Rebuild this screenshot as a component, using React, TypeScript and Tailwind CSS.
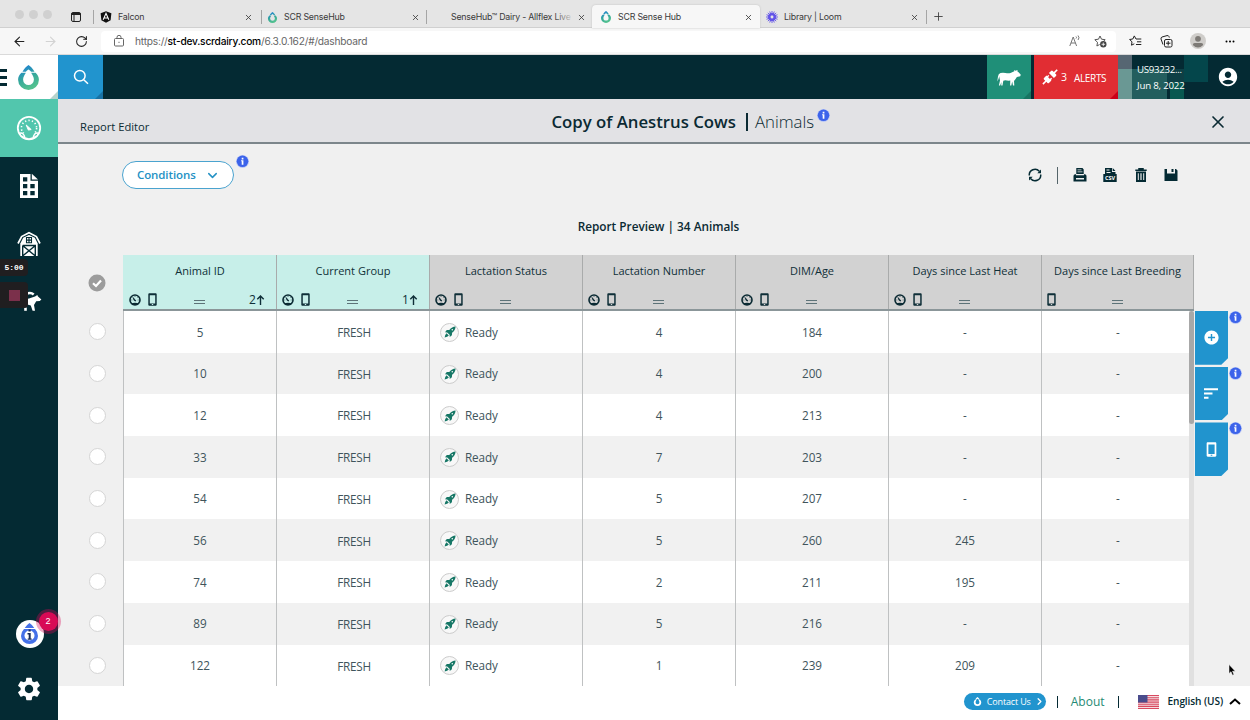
import type { ReactNode } from "react";
import { ArrowLeft, ArrowRight, ChevronDown, ChevronRight, Plus, RotateCw, X } from "lucide-react";
import { MdAccountCircle, MdAddCircle, MdSettings } from "react-icons/md";
import { clsx } from "clsx";

const columns = [
  { label: "Animal ID", gauge: true, sort: "2" },
  { label: "Current Group", gauge: true, sort: "1" },
  { label: "Lactation Status", gauge: true },
  { label: "Lactation Number", gauge: true },
  { label: "DIM/Age", gauge: true },
  { label: "Days since Last Heat", gauge: true },
  { label: "Days since Last Breeding", gauge: false },
];

const rows = [
  ["5", "4", "184", "-"],
  ["10", "4", "200", "-"],
  ["12", "4", "213", "-"],
  ["33", "7", "203", "-"],
  ["54", "5", "207", "-"],
  ["56", "5", "260", "245"],
  ["74", "2", "211", "195"],
  ["89", "5", "216", "-"],
  ["122", "1", "239", "209"],
];

function Drop({ size, mono }: { size: number; mono?: boolean }) {
  return (
    <svg width={size} height={size} viewBox="0 0 24 24" className="shrink-0">
      <defs>
        <linearGradient id="drop" x1="0" y1="0" x2="0.4" y2="1">
          <stop offset="0.2" stopColor="#2389c9" />
          <stop offset="0.6" stopColor="#36a99a" />
          <stop offset="1" stopColor="#52c18f" />
        </linearGradient>
      </defs>
      <path
        fill={mono ? "#fff" : "url(#drop)"}
        fillRule="evenodd"
        d="M12 0c2 1 4.400 4 5.800 6.500h-3.300C13.300 5.300 12.600 4.700 12 4.400c-.6.300-1.300.9-2.500 2.100H6.200C7.600 4 10 1 12 0ZM5.200 7.500h4.300C8.300 9.500 6.800 11.600 6.800 14a5.200 5.200 0 0 0 10.400 0c0-2.400-1.500-4.500-2.700-6.500h4.300c2 2 3.200 4.200 3.200 6.700a10 9.800 0 0 1-20 0c0-2.500 1.200-4.700 3.200-6.700Z"
      />
    </svg>
  );
}

function InfoBadge({ className }: { className?: string }) {
  return (
    <svg width="13" height="13" viewBox="0 0 13 13" className={clsx("shrink-0", className)}>
      <circle cx="6.500" cy="6.500" r="6.500" fill="#b9c6f5" />
      <circle cx="6.500" cy="6.300" r="5.800" fill="#3c63ea" />
      <path d="M5.700 2.800h1.700v1.600H5.700zM5.100 5.300h2.300v4.400H5.700V6.300h-.6z" fill="#fff" />
    </svg>
  );
}

function Gauge() {
  return (
    <svg width="12" height="12" viewBox="0 0 12 12">
      <circle cx="6" cy="6" r="5" fill="none" stroke="#0b2a33" strokeWidth="1.600" />
      <path d="M2 9.500q4-1.500 8 0L8.500 11h-5Z" fill="#0b2a33" />
      <path d="M4 3.500l1.200 3L7 7Z" fill="#0b2a33" stroke="#0b2a33" strokeWidth=".8" />
      <path d="M2.300 6h1M6 2v1M9.700 6h-1M8.600 3.400l-.6.600" stroke="#0b2a33" strokeWidth=".6" />
    </svg>
  );
}

function Phone({ className }: { className?: string }) {
  return (
    <svg width="9" height="13" viewBox="0 0 9 13" className={className}>
      <path
        fill="currentColor"
        fillRule="evenodd"
        d="M1.200.3h6.600c.5 0 .9.400.9.900v10.600c0 .5-.4.900-.9.900H1.200c-.5 0-.9-.4-.9-.9V1.200c0-.5.400-.9.900-.9ZM1.800 2.200v8.200h5.400V2.200ZM3.800 11.100v.8h1.400v-.8Z"
      />
    </svg>
  );
}

function Rocket() {
  return (
    <svg width="12" height="12" viewBox="0 0 12 12" fill="#167766">
      <path fillRule="evenodd" d="M11.600.4C9.200.5 7 1.700 5.300 3.900L2.800 4.100 1 6.200l2.200.2L5.600 8.800l.2 2.200 2.100-1.800.2-2.500C10.300 5 11.500 2.800 11.600.4ZM8.300 2.900a.8.800 0 1 1 0 1.600.8.800 0 0 1 0-1.600Z" />
      <path d="M2.500 7.200l2.300 2.300Q3.500 11 .6 11.400 1 8.500 2.500 7.200Z" />
    </svg>
  );
}

function Cow() {
  return (
    <svg width="24" height="16" viewBox="0 0 24 16" className="mt-px">
      <path
        fill="currentColor"
        d="M.3 11.500L1 6.500Q1.300 3.500 3.500 2.900q2.500-.4 5 0 3 .5 5 0L17.300 1.300 17.200.1l1.300.6L20.600 0l-.3 1.300 1.500 1.200 2 2.300-.6 1.500-3.300.6-1.700 2.600-1.200 1.500.3 4.500h-1.300l-.8-4.100-.9 4.100h-1.200l.2-4.900Q11 11 8.300 10.300l-2 .5-.8 4.700H4.200l.2-3.500-1.300 3.500H1.900l1.100-5.100L2.200 6.300 1.500 9Z"
      />
    </svg>
  );
}

function CalfIcon() {
  return (
    <svg width="26" height="26" viewBox="0 0 26 26" fill="#fff">
      <path d="M10 5.200q4.500-2.600 7.700.3" fill="none" stroke="#fff" strokeWidth="2.400" />
      <path d="M8 10.500l5-1 6-2 2.300-1.600.7 1.600 3.400 2.900-1.600 1.600-3.600.2L18 16l1 5.800h-2.400L14.800 16.500 8 14.500Z" />
      <path d="M8.200 18.500h2.600v3.300H8.200z" />
    </svg>
  );
}

function DashboardIcon() {
  return (
    <svg width="26" height="26" viewBox="0 0 26 26" fill="none" stroke="#fff">
      <circle cx="13" cy="13" r="11.200" strokeWidth="1.800" />
      <circle cx="13" cy="13" r="7.600" strokeWidth="1.600" strokeDasharray="1.300 2.200" />
      <path d="M5 17.500l4 .8 1.500-1.300h5l1.500 1.300 4-.8v4.200L13 25l-8-3.200Z" fill="#52c6ad" stroke="none" />
      <path d="M4.800 20.700q8.200 7 16.400 0" strokeWidth="1.800" />
      <path d="M3.600 18.200c3-1 5 1.300 5 5M22.400 18.200c-3-1-5 1.300-5 5" strokeWidth="1.400" />
      <path d="M10.200 10l5 4.500-2.800.6Z" fill="#fff" strokeWidth="1" />
    </svg>
  );
}

function ReportIcon() {
  return (
    <svg width="20" height="26" viewBox="0 0 20 26">
      <path fill="#fff" fillRule="evenodd" d="M1 1h10.500v6.800H19V25H1ZM4 4.200v4.300h4.300V4.200ZM4 11v4.300h4.300V11Zm7.300 0v4.300h4.400V11ZM4 18v4.300h4.300V18Zm7.300 0v4.300h4.400V18Z" />
      <path fill="#fff" d="M12.800.8L19 6.600h-6.200Z" />
    </svg>
  );
}

function BarnIcon() {
  return (
    <svg width="24" height="26" viewBox="0 0 24 26" fill="none">
      <path d="M1 12.500L4.600 5.600 12 1.800l7.400 3.800 3.600 6.900" stroke="#fff" strokeWidth="1.700" />
      <path d="M3.300 12.500L6.200 6.800 12 3.900l5.800 2.900 2.900 5.700V25H3.300Z" fill="#fff" />
      <path d="M9.500 6.500h5v5.200h-5zM12 6.500v5.200M9.500 9.100h5" stroke="#042a33" strokeWidth="1.100" />
      <path d="M5.700 14.500h12.600V25M5.700 14.500V25M6.200 15L17.800 24.500M17.800 15L6.200 24.500" stroke="#042a33" strokeWidth="1.400" />
    </svg>
  );
}

function Tab({ icon, title, className, fade }: { icon?: ReactNode; title: string; className?: string; fade?: boolean }) {
  return (
    <div className={clsx("relative flex items-center", className)}>
      <span className="flex w-3 shrink-0 justify-center">{icon}</span>
      <span className="ml-1.5 flex-1 whitespace-nowrap">{title}</span>
      {fade && <span className="absolute right-[18px] h-3.5 w-5 bg-linear-to-r from-transparent to-[#e5e5e5]" />}
      <X size={9} strokeWidth={2.200} className="shrink-0" />
    </div>
  );
}

function BrowserChrome() {
  return (
    <div className="h-[55px] font-['Inter'] text-[#3a3a3a]">
      <div className="flex h-7 items-end border-b border-[#d0d0d0] bg-[#e5e5e5] text-[8.800px] tracking-[-0.200px]">
        <div className="flex h-full w-[93px] items-center pt-0.5">
          <div className="ml-[15px] flex gap-[5px]">
            <span className="size-[9px] rounded-full bg-[#d0d0d0]" />
            <span className="size-[9px] rounded-full bg-[#d0d0d0]" />
            <span className="size-[9px] rounded-full bg-[#d0d0d0]" />
          </div>
          <svg width="10" height="10" viewBox="0 0 10 10" className="ml-[19px] mt-1" fill="none" stroke="#222">
            <rect x=".5" y=".5" width="9" height="9" rx="1.500" />
            <path d="M.5 2h9" strokeWidth="2" />
            <path d="M3 2v7.500" />
          </svg>
        </div>
        <Tab
          title="Falcon"
          className="mb-[3px] h-3.5 w-[168px] border-l border-[#a5a5a5] pr-2 pl-[6px]"
          icon={
            <svg width="12" height="12" viewBox="0 0 12 12">
              <path d="M6 .3l5.400 1.900-.8 7.100L6 11.800 1.400 9.300.6 2.200Z" fill="#111" />
              <path d="M3.200 8.800L6 2.300l2.800 6.500M4.300 7h3.400" stroke="#fff" fill="none" strokeWidth="1.100" />
            </svg>
          }
        />
        <Tab title="SCR SenseHub" className="mb-[3px] h-3.5 w-[165px] border-l border-[#a5a5a5] pr-[6px] pl-[4px]" icon={<Drop size={11} />} />
        <Tab title="SenseHub™ Dairy - Allflex Live" fade className="mb-[3px] h-3.5 w-[166px] border-l border-[#a5a5a5] pr-[6px] pl-1.5 tracking-[-0.220px]" />
        <Tab title="SCR Sense Hub" className="-mb-px h-[23px] w-[168px] rounded-t bg-[#f7f7f7] pt-px pr-[7px] pl-2 shadow-[0_0_2px_#bbb]" icon={<Drop size={12} />} />
        <Tab
          title="Library | Loom"
          className="mb-[3px] h-3.5 w-[167px] border-r border-[#a5a5a5] pr-[7px] pl-[6px]"
          icon={
            <svg width="12" height="12" viewBox="0 0 12 12" stroke="#6254e8" fill="none">
              <circle cx="6" cy="6" r="3" strokeWidth="2" />
              <path d="M6 0v12M0 6h12M1.800 1.800l8.400 8.400M10.200 1.800l-8.400 8.400M3.700.5l4.600 11M.5 8.300l11-4.600M8.300.5L3.700 11.500M.5 3.700l11 4.600" strokeWidth=".9" />
              <circle cx="6" cy="6" r="1.400" fill="#e5e5e5" stroke="none" />
            </svg>
          }
        />
        <Plus size={13} strokeWidth={1.600} className="mb-[4px] ml-[5px]" />
      </div>
      <div className="flex h-[27px] items-center border-b border-[#dadada] bg-[#f7f7f7] text-[#222]">
        <ArrowLeft size={15} strokeWidth={1.700} className="ml-[12px]" />
        <ArrowRight size={15} strokeWidth={1.700} className="ml-[16px] text-[#d3d3d3]" />
        <RotateCw size={13} strokeWidth={1.900} className="ml-[17px]" />
        <div className="ml-[13px] flex h-[21px] w-[1015px] items-center rounded-sm bg-white text-[10.200px] text-[#666]">
          <svg width="10" height="12" viewBox="0 0 10 12" fill="none" stroke="#666" className="ml-[13px]">
            <rect x=".5" y="3.500" width="9" height="7.500" rx="1" />
            <path d="M3 3.500V2.300a2 2 0 0 1 4 0v1.200M4.400 7.300h1.200" />
          </svg>
          <span className="ml-[11px] w-[233px] pt-px tracking-[-0.220px] whitespace-nowrap">
            https://<span className="font-medium text-black">st-dev.scrdairy.com</span>/6.3.0.162/#/dashboard
          </span>
          <svg width="12" height="12" viewBox="0 0 12 12" fill="none" stroke="#666" strokeWidth=".9" className="ml-auto">
            <path d="M.8 11L4.200 2l3.400 9M2 8h4.400M7 3.500q1-1 0-2M9 5q2-2.300 0-4.500" />
          </svg>
          <svg width="13" height="13" viewBox="0 0 13 13" fill="none" stroke="#555" className="mr-[9px] ml-[13px]">
            <path d="M6 1l1.500 3.200 3.700.5-2.600 2.500M6 1L4.500 4.200.8 4.700l2.700 2.600-.6 3.700 2.700-1.500" />
            <circle cx="9.300" cy="9.300" r="3.200" fill="#444" stroke="none" />
            <path d="M9.300 7.500v3.600M7.500 9.300h3.600" stroke="#fff" strokeWidth=".8" />
          </svg>
        </div>
        <svg width="13" height="12" viewBox="0 0 13 12" fill="none" stroke="#222" className="ml-[13px]">
          <path d="M7 4L5.300.9 3.800 4 .6 4.500 3 6.800l-.5 3.400 2.800-1.400M7 4h5.300M8 6.800h4.300M7 9.500h5.300" />
        </svg>
        <svg width="13" height="13" viewBox="0 0 13 13" fill="none" stroke="#222" className="ml-[18px]">
          <rect x="4.500" y="4.500" width="7.500" height="7.500" rx="1.500" />
          <path d="M8.200 6v4.500M6 8.200h4.500M3 9.500L1 4Q.7 2.500 2 2l5-1.400q1.500-.3 2 1l.3 1" />
        </svg>
        <svg width="16" height="16" viewBox="0 0 16 16" className="ml-[17px]">
          <circle cx="8" cy="8" r="8" fill="#cfcdca" />
          <circle cx="8" cy="5.800" r="2.900" fill="#7d7a76" />
          <path d="M2.800 12q0-2 2-2h6.400q2 0 2 2-5.200 5-10.400 0Z" fill="#7d7a76" />
        </svg>
        <svg width="10" height="3" viewBox="0 0 10 3" className="ml-[19px]">
          <circle cx="1.500" cy="1.500" r="1" />
          <circle cx="5" cy="1.500" r="1" />
          <circle cx="8.500" cy="1.500" r="1" />
        </svg>
      </div>
    </div>
  );
}

function TopBar() {
  return (
    <header className="flex h-11 bg-[#042a33] text-white">
      <div className="relative flex w-[58px] items-center bg-white">
        <div className="flex w-[7px] flex-col gap-1">
          <span className="h-[3px] bg-[#042a33]" />
          <span className="h-[3px] bg-[#042a33]" />
          <span className="h-[3px] bg-[#042a33]" />
        </div>
        <div className="ml-[9px]">
          <Drop size={25} />
        </div>
        <span className="absolute right-0 bottom-0 size-2 bg-[#b5d3cc] [clip-path:polygon(100%_0,100%_100%,0_100%)]" />
      </div>
      <div className="relative flex w-[45px] items-center justify-center bg-[#2194ce]">
        <svg width="16" height="16" viewBox="0 0 16 16" fill="none" stroke="#fff" strokeWidth="1.500">
          <circle cx="6.800" cy="6.800" r="5.300" />
          <path d="M10.700 10.700L15 14.800" />
        </svg>
        <span className="absolute right-0 bottom-0 size-2 bg-[#1872a5] [clip-path:polygon(100%_0,100%_100%,0_100%)]" />
      </div>
      <div className="relative ml-auto flex w-11 items-center justify-center bg-[#1f8f78]">
        <Cow />
        <span className="absolute right-0 bottom-0 size-2 bg-[#177562] [clip-path:polygon(100%_0,100%_100%,0_100%)]" />
      </div>
      <div className="relative ml-[3px] flex w-[84px] items-center bg-[#e12d33]">
        <svg width="16" height="16" viewBox="0 0 16 16" className="ml-2">
          <g transform="rotate(-45 8 8)" fill="#fff">
            <path d="M-2 7.200h4V5.500q0-1 1-1h3.500v7H3q-1 0-1-1V8.800h-4ZM6.500 5.300h1.800v1.400H6.500zM6.500 9.300h1.800v1.400H6.500zM10 4.500h3q1.200 0 1.200 1.200v1.500h4v1.600h-4v1.500q0 1.200-1.200 1.200h-3Z" />
          </g>
        </svg>
        <span className="ml-[3px] pt-0.5 text-[10.500px]">3</span>
        <span className="ml-[7px] pt-0.5 text-[10px] tracking-[-0.350px]">ALERTS</span>
        <span className="absolute right-0 bottom-0 size-2 bg-[#cc0018] [clip-path:polygon(100%_0,100%_100%,0_100%)]" />
      </div>
      <div className="relative w-[90px]">
        <svg width="90" height="44" className="absolute inset-0">
          <path d="M0 0h14v14H0z" fill="#566672" />
          <path d="M0 14h14v30H0z" fill="#6a9894" />
          <path d="M14 14h35v30H14z" fill="#235e5e" />
          <path d="M52 27h14v17H52z" fill="#085850" />
          <path d="M49 14h17v13H49z" fill="#0d3f45" />
          <path d="M66 0h24v27H66z" fill="#04464b" />
        </svg>
        <div className="relative ml-[19px] pt-[7px] text-[9.700px] leading-4 tracking-[-0.200px] whitespace-nowrap">
          <p className="tracking-[-0.300px]">US93232...</p>
          <p>Jun 8, 2022</p>
        </div>
      </div>
      <div className="flex w-[42px] items-center pl-[9px]">
        <MdAccountCircle size={22} />
      </div>
    </header>
  );
}

function Sidebar() {
  return (
    <aside className="relative flex w-[58px] shrink-0 flex-col items-center bg-[#042a33] text-white">
      <div className="flex h-[58px] w-full items-center justify-center bg-[#52c6ad]">
        <DashboardIcon />
      </div>
      <div className="flex h-[58px] items-center">
        <ReportIcon />
      </div>
      <div className="flex h-[58px] items-center">
        <BarnIcon />
      </div>
      <div className="flex h-[58px] items-center">
        <CalfIcon />
      </div>
      <div className="relative mt-auto mb-[27px] ml-px flex size-7 items-center justify-center rounded-full bg-white">
        <svg width="19" height="22" viewBox="0 0 19 22">
          <path d="M9.500 0q3 2 4.800 5H4.700Q6.500 2 9.500 0ZM4 6h11q3 3 3 7a8.500 8 0 0 1-17 0q0-4 3-7Z" fill="#4470e8" />
          <circle cx="9.500" cy="12.500" r="5" fill="#fff" />
          <path d="M8.500 6.500h2.200v2H8.500zM7.500 10h3.200v5.500h1v1.300h-4v-1.300h1v-4H7.500z" fill="#182a5a" />
        </svg>
        <span className="absolute -top-2 -right-[14px] flex size-[19px] items-center justify-center rounded-full bg-[#d80a55] font-['Liberation_Sans'] text-[9px] shadow-[0_0_0_3px_rgba(216,10,85,0.35)]">2</span>
      </div>
      <MdSettings size={28} className="mb-[17px]" />
      <div className="absolute top-[160px] left-0 flex h-[17px] w-[28px] items-center justify-center rounded-r bg-[#201e20] font-['Liberation_Mono'] text-[8px] font-bold">5:00</div>
      <div className="absolute top-[183px] left-0 flex h-[26px] w-[28px] items-center justify-center rounded-r bg-[#201e20]">
        <span className="size-[11px] bg-[#7b304b]" />
      </div>
    </aside>
  );
}

function Toolbar() {
  return (
    <div className="flex items-center text-[#042a33]">
      <svg width="14" height="14" viewBox="0 0 14 14" fill="none" stroke="currentColor" strokeWidth="1.500">
        <path d="M1.300 7.500A5.700 5.700 0 0 1 11.300 3.300M12.700 6.500A5.700 5.700 0 0 1 2.700 10.700" />
        <path d="M13 1.500v3.700H9.300ZM1 12.500V8.800h3.700Z" fill="currentColor" stroke="none" />
      </svg>
      <span className="ml-[15px] h-[17px] w-px bg-[#55656a]" />
      <svg width="14" height="14" viewBox="0 0 14 14" fill="currentColor" className="ml-[15px]">
        <path d="M3.300 0h6.200l1.200 1.400V6H3.300ZM4.500 1.500v.8h4v-.8Zm0 2v.8h5v-.8Z" fillRule="evenodd" />
        <path d="M2.300 6.200h.7v1h8v-1h.7q1.800 0 1.800 1.800v5.500H.5V8q0-1.800 1.800-1.800ZM3 10v1.600h8V10Z" fillRule="evenodd" />
      </svg>
      <svg width="14" height="14" viewBox="0 0 14 14" className="ml-4">
        <path d="M2 0h7v4h3.500v3H2ZM3.500 1.500v1h3v-1Zm0 2.500v1h4V4Z" fill="#042a33" fillRule="evenodd" />
        <path d="M9.700 0l2.800 3H9.700ZM.3 6h13.400v8H.3Z" fill="#042a33" />
        <text x="7" y="12" textAnchor="middle" fill="#fff" fontSize="5.500" fontWeight="700" fontFamily="Open Sans">CSV</text>
      </svg>
      <svg width="12" height="14" viewBox="0 0 12 14" fill="none" stroke="currentColor" className="ml-[18px]">
        <path d="M.3 2.200h11.400M4 2V.7h4V2" strokeWidth="1.500" />
        <path d="M1.900 4.300h8.200V13H1.900Z" strokeWidth="1.800" />
        <path d="M4.600 4.500V13M7.400 4.500V13" strokeWidth="1.600" />
      </svg>
      <svg width="14" height="14" viewBox="0 0 14 14" fill="currentColor" fillRule="evenodd" className="ml-[17px]">
        <path d="M.5 1H3v4.500h8V1h1l1.500 1.400V13H.5ZM7.500 1h2v3h-2Z" />
      </svg>
    </div>
  );
}

function HeaderCell({ label, gauge, sort }: { label: string; gauge: boolean; sort?: string }) {
  return (
    <div
      className={clsx(
        "flex w-[153px] flex-col justify-between border-l border-[#a9abab] pt-2 pb-[3px] text-[#0f2f38] first:border-l-[#c7efe9] last:border-r",
        sort ? "bg-[#c7efe9]" : "bg-[#d2d2d2]"
      )}
    >
      <p className="text-center text-[11px] leading-4 font-medium whitespace-nowrap">{label}</p>
      <div className="grid grid-cols-3 items-end px-[5px]">
        <div className="mt-px flex items-center gap-[7px] self-start">
          {gauge && <Gauge />}
          <Phone />
        </div>
        <div className="mb-[2px] h-1 w-[11px] justify-self-center border-y border-[#5d7378]" />
        <div className="-mb-px flex h-3.5 items-center justify-end pr-1.5 text-[12px]">
          {sort}
          {sort && (
            <svg width="9" height="10" viewBox="0 0 9 10" fill="none" stroke="currentColor" strokeWidth="1.400">
              <path d="M4.500 10V1.200M1.300 4.300L4.500 1l3.200 3.300" />
            </svg>
          )}
        </div>
      </div>
    </div>
  );
}

function Cell({ children, left }: { children: ReactNode; left?: boolean }) {
  return (
    <div
      className={clsx(
        "flex w-[153px] shrink-0 items-center border-l border-[#bfc1c2] pt-px",
        left ? "pl-2.5" : "justify-center"
      )}
    >
      {children}
    </div>
  );
}

function ReportTable() {
  return (
    <div className="flex flex-1 overflow-hidden">
      <div className="w-[65px] shrink-0">
        <div className="flex h-[56px] items-center justify-center pl-3">
          <svg width="18" height="18" viewBox="0 0 18 18">
            <circle cx="9" cy="9" r="8.500" fill="#9c9c9c" />
            <path d="M5 9.200l3 2.800 5-5.500" stroke="#fff" strokeWidth="2.200" fill="none" />
          </svg>
        </div>
        {rows.map((row) => (
          <div key={row[0]} className="flex h-[41.700px] items-center justify-center pl-[13px]">
            <span className="size-[17px] rounded-full border border-[#d5d5d5] bg-white" />
          </div>
        ))}
      </div>
      <div className="w-[1071px] shrink-0">
        <div className="flex h-[56px] border-b-2 border-[#8b9699]">
          {columns.map((column) => (
            <HeaderCell key={column.label} {...column} />
          ))}
        </div>
        <div className="flex">
          <div className="w-[1066px] overflow-hidden text-[11.700px] text-[#40545b]">
            {rows.map(([id, lactation, age, heat]) => (
              <div key={id} className="flex h-[41.700px] w-[1071px] odd:bg-white even:bg-[#f1f1f1]">
                <Cell>{id}</Cell>
                <Cell>
                  <span className="pt-px pl-0.5 tracking-[-0.250px]">FRESH</span>
                </Cell>
                <Cell left>
                  <span className="flex size-[19px] items-center justify-center rounded-full border border-[#ccc] bg-[#f8f8f8]">
                    <Rocket />
                  </span>
                  <span className="ml-1.5 tracking-[-0.100px]">Ready</span>
                </Cell>
                <Cell>{lactation}</Cell>
                <Cell>{age}</Cell>
                <Cell>{heat}</Cell>
                <Cell>-</Cell>
              </div>
            ))}
          </div>
          <div className="w-[5px] bg-[#e0e0e0]">
            <div className="h-[113px] rounded-sm bg-[#a8a8a8]" />
          </div>
        </div>
      </div>
      <div className="flex flex-col gap-[2px] pt-[56px] pl-[0.500px] text-white">
        <SideAction>
          <MdAddCircle size={17} />
        </SideAction>
        <SideAction>
          <svg width="14" height="11" viewBox="0 0 14 11" stroke="currentColor" strokeWidth="2">
            <path d="M0 1.200h14M0 5.500h8.500M0 9.800h4.500" />
          </svg>
        </SideAction>
        <SideAction>
          <Phone className="h-[15px] w-[11px]" />
        </SideAction>
      </div>
    </div>
  );
}

function SideAction({ children }: { children: ReactNode }) {
  return (
    <div className="flex h-[53.700px] gap-px">
      <div className="flex w-[33.500px] items-center justify-center bg-[#2194ce] [clip-path:polygon(0_0,100%_0,100%_88%,80%_100%,0_100%)]">{children}</div>
      <InfoBadge />
    </div>
  );
}

function Footer() {
  return (
    <footer className="flex h-[34px] items-center justify-end bg-white pr-[9px] pb-[3px] text-[#042a33]">
      <div className="flex h-[17px] w-[82px] items-center rounded-full bg-[#2194ce] pl-[9px] text-[9px] text-white">
        <Drop size={9} mono />
        <span className="ml-[5px] tracking-[-0.150px]">Contact Us</span>
        <ChevronRight size={11} strokeWidth={2.800} className="ml-[3px]" />
      </div>
      <span className="ml-[11px] h-3 w-px bg-[#042a33]" />
      <span className="ml-[13px] text-[12px] text-[#1f8a74]">About</span>
      <span className="ml-[13px] h-3 w-px bg-[#042a33]" />
      <svg width="21" height="14" viewBox="0 0 21 14" className="ml-[19px]">
        <path d="M0 0h21v14H0z" fill="#f3dde0" />
        <path d="M0 .5h21M0 2.700h21M0 4.900h21M0 7.100h21M0 9.300h21M0 11.400h21M0 13.500h21" stroke="#d94a60" strokeWidth="1.100" />
        <path d="M0 0h9.500v7.500H0z" fill="#4a4c8c" />
      </svg>
      <span className="ml-[9px] text-[10.100px] font-semibold tracking-[-0.100px]">English (US)</span>
      <svg width="12" height="7" viewBox="0 0 12 7" fill="none" stroke="#000" strokeWidth="2" className="ml-1.5">
        <path d="M1 6l5-4.500L11 6" />
      </svg>
    </footer>
  );
}

export default function App() {
  return (
    <div className="relative flex h-[720px] w-[1250px] flex-col overflow-hidden bg-[#f0f0f0] font-['Open_Sans',sans-serif]">
      <BrowserChrome />
      <TopBar />
      <div className="flex min-h-0 flex-1">
        <Sidebar />
        <main className="flex min-w-0 flex-1 flex-col">
          <div className="flex h-[45px] items-center border-b-2 border-[#7c868b] bg-[#e2e2e5] text-[#0b2a33]">
            <span className="w-[493.500px] pt-3.5 pl-[22px] text-[11.200px]">Report Editor</span>
            <h1 className="pt-0.5 text-[16.750px] font-semibold whitespace-nowrap">Copy of Anestrus Cows</h1>
            <span className="mt-0.5 ml-[10px] h-[18px] w-[2px] bg-[#0b2a33]" />
            <span className="ml-[7px] pt-0.5 text-[16.800px] font-light">Animals</span>
            <InfoBadge className="mb-2.5 ml-[3px]" />
            <X size={20} strokeWidth={2} className="mt-0.5 mr-[22px] ml-auto" />
          </div>
          <div className="flex h-[62px] items-center pr-[72px] pl-16">
            <button className="flex h-7 w-[112px] items-center justify-between rounded-full border border-[#4aa3cf] bg-white pr-[13px] pl-[14px] text-[11.500px] font-semibold tracking-[-0.100px] text-[#2491c4]">
              Conditions
              <ChevronDown size={15} strokeWidth={2.300} />
            </button>
            <InfoBadge className="mb-7 ml-0.5" />
            <div className="ml-auto">
              <Toolbar />
            </div>
          </div>
          <div className="flex h-[49px] justify-center pt-3 pl-[9px] text-[11.800px] font-semibold text-[#0b2a33]">Report Preview | 34 Animals</div>
          <ReportTable />
          <Footer />
        </main>
      </div>
      <svg width="8" height="12" viewBox="0 0 8 12" className="absolute top-[664px] left-[1228px]">
        <path d="M1 .5v9l2-1.800 1.500 3.500 1.500-.7-1.500-3.300h2.800Z" fill="#000" stroke="#fff" strokeWidth=".5" />
      </svg>
    </div>
  );
}
